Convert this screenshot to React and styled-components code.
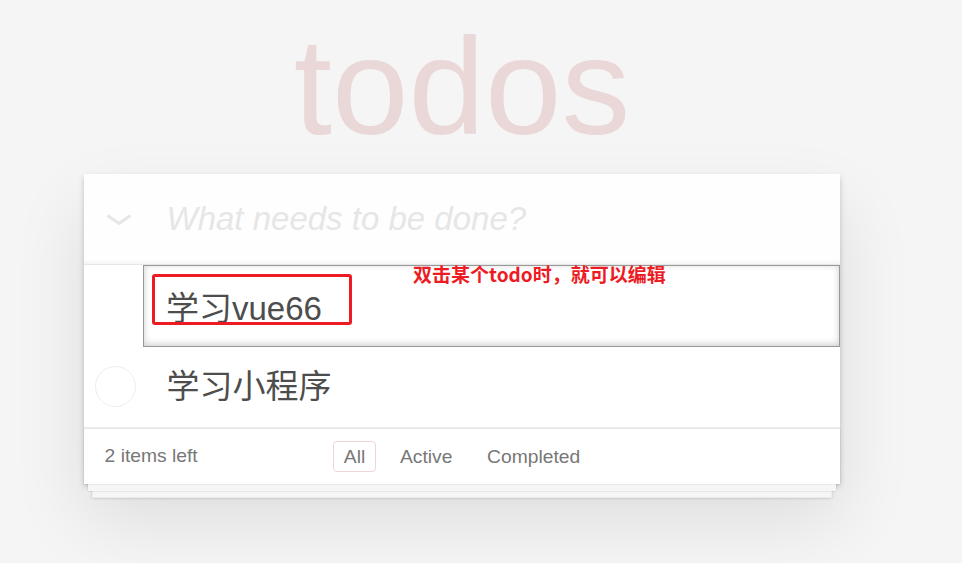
import React from "react";
import styled, { createGlobalStyle } from "styled-components";

const GlobalStyle = createGlobalStyle`
  html, body {
    margin: 0;
    padding: 0;
    background: #f5f5f5;
  }
  body {
    min-height: 100vh;
    color: #4d4d4d;
    font-family: "Liberation Sans", "Noto Sans CJK SC", Arial, sans-serif;
    font-size: 19.25px;
    line-height: 26.95px;
    -webkit-font-smoothing: antialiased;
  }
  * { box-sizing: border-box; }
`;

const Page = styled.div`
  width: 840px;
  padding: 0 0 90px 84px;
`;

const Title = styled.h1`
  margin: 0;
  padding-top: 18px;
  height: 174px;
  font-family: "Liberation Sans", Arial, sans-serif;
  font-size: 137.5px;
  line-height: 137.5px;
  font-weight: 400;
  text-align: center;
  color: rgba(175, 47, 47, 0.15);
`;

const TodoApp = styled.section`
  position: relative;
  background: #fff;
  box-shadow: 0 2.75px 5.5px 0 rgba(0, 0, 0, 0.2),
    0 34px 69px 0 rgba(0, 0, 0, 0.1);
`;

const Header = styled.header`
  display: flex;
  align-items: center;
  height: 90px;
  background: rgba(0, 0, 0, 0.003);
  box-shadow: inset 0 -2.75px 1.4px rgba(0, 0, 0, 0.03);
`;

const ToggleAll = styled.div`
  width: 82.5px;
  flex: none;
  display: flex;
  align-items: center;
  padding: 2px 0 0 22px;
`;

const NewTodo = styled.input`
  flex: 1;
  min-width: 0;
  border: none;
  outline: none;
  background: transparent;
  padding: 0 22px 0 0;
  height: 90px;
  font-family: "Liberation Sans", "Noto Sans CJK SC", Arial, sans-serif;
  font-size: 33px;
  color: #4d4d4d;
  &::placeholder {
    font-style: italic;
    font-weight: 300;
    color: #e6e6e6;
  }
`;

const Main = styled.section`
  border-top: 1px solid #e6e6e6;
`;

const List = styled.ul`
  margin: 0;
  padding: 0;
  list-style: none;
`;

const EditItem = styled.li`
  position: relative;
  padding-left: 59px;
`;

const EditInput = styled.input`
  display: block;
  width: 100%;
  margin: 0;
  padding: 16.5px 22px;
  font-family: "Liberation Sans", "Noto Sans CJK SC", Arial, sans-serif;
  font-size: 33px;
  line-height: 46.2px;
  height: 81.5px;
  color: #4d4d4d;
  border: 1px solid #999;
  outline: none;
  background: #fff;
  box-shadow: inset 0 -1.4px 7px 0 rgba(0, 0, 0, 0.2);
`;

const MarkBox = styled.div`
  position: absolute;
  left: 68px;
  top: 9px;
  width: 200px;
  height: 51px;
  border: 3.5px solid #ed1c24;
  border-radius: 3px;
  pointer-events: none;
`;

const Note = styled.div`
  position: absolute;
  left: 329px;
  top: -5px;
  font-family: "Noto Sans CJK SC", "Liberation Sans", sans-serif;
  font-weight: 700;
  font-size: 19px;
  line-height: 27px;
  color: #ed1c24;
  white-space: nowrap;
`;

const Item = styled.li`
  display: flex;
  align-items: center;
  border-bottom: 1px solid #ededed;
`;

const Toggle = styled.div`
  width: 82.5px;
  flex: none;
  padding-left: 11px;
  display: flex;
  align-items: center;
`;

const Circle = styled.span`
  display: block;
  width: 41px;
  height: 41px;
  border-radius: 50%;
  border: 1.5px solid #ededed;
`;

const Label = styled.label`
  flex: 1;
  padding: 20.6px 20.6px 20.6px 0;
  font-size: 33px;
  line-height: 39.6px;
  color: #4d4d4d;
  font-family: "Liberation Sans", "Noto Sans CJK SC", Arial, sans-serif;
`;

const Footer = styled.footer`
  position: relative;
  display: grid;
  grid-template-columns: 1fr auto 1fr;
  align-items: center;
  height: 56px;
  padding: 0 20.6px;
  color: #777;
  border-top: 1px solid #e6e6e6;
  &::before {
    content: "";
    position: absolute;
    left: 0;
    right: 0;
    bottom: 0;
    height: 56px;
    overflow: hidden;
    box-shadow: 0 1.4px 1.4px rgba(0, 0, 0, 0.2),
      0 11px 0 -4px #f6f6f6,
      0 12.4px 1.4px -4px rgba(0, 0, 0, 0.2),
      0 22px 0 -8.25px #f6f6f6,
      0 23.4px 2.75px -8.25px rgba(0, 0, 0, 0.2);
    pointer-events: none;
  }
`;

const Count = styled.span`
  justify-self: start;
`;

const Filters = styled.ul`
  margin: 0;
  padding: 0;
  list-style: none;
  display: flex;
  align-items: center;
  gap: 5.5px;
`;

const FilterItem = styled.li`
  display: inline;
`;

const FilterLink = styled.a`
  display: inline-block;
  margin: 0 4px;
  padding: 1px 9.6px;
  line-height: 27px;
  color: inherit;
  text-decoration: none;
  border: 1.375px solid
    ${(p) => (p.$selected ? "rgba(175, 47, 47, 0.2)" : "transparent")};
  border-radius: 4px;
`;

const Chevron = () => (
  <svg width="26" height="12" viewBox="0 0 26 12" aria-hidden="true">
    <polyline
      points="1.5,1.5 13,9.5 24.5,1.5"
      fill="none"
      stroke="#e6e6e6"
      strokeWidth="3"
    />
  </svg>
);

export default function App() {
  return (
    <>
      <GlobalStyle />
      <Page>
        <Title>todos</Title>
        <TodoApp>
          <Header>
            <ToggleAll>
              <Chevron />
            </ToggleAll>
            <NewTodo placeholder="What needs to be done?" />
          </Header>
          <Main>
            <List>
              <EditItem>
                <EditInput defaultValue="学习vue66" />
                <MarkBox />
                <Note>双击某个todo时，就可以编辑</Note>
              </EditItem>
              <Item>
                <Toggle>
                  <Circle />
                </Toggle>
                <Label>学习小程序</Label>
              </Item>
            </List>
          </Main>
          <Footer>
            <Count>2 items left</Count>
            <Filters>
              <FilterItem>
                <FilterLink $selected>All</FilterLink>
              </FilterItem>
              <FilterItem>
                <FilterLink>Active</FilterLink>
              </FilterItem>
              <FilterItem>
                <FilterLink>Completed</FilterLink>
              </FilterItem>
            </Filters>
            <span />
          </Footer>
        </TodoApp>
      </Page>
    </>
  );
}
